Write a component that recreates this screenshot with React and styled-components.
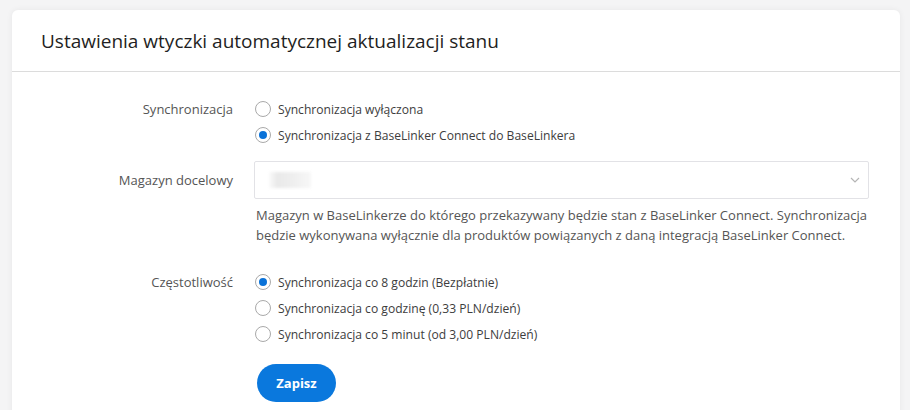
import React, { useState } from 'react'
import styled, { createGlobalStyle } from 'styled-components';

const GlobalStyle = createGlobalStyle`
    body {
        margin: 0;
        background: #f4f4f5;
        font-family: 'Open Sans', 'Liberation Sans', sans-serif;
        color: #444;
    }
`

function Radio({ checked, label, onClick }) {
    return (
        <Option onClick={onClick}>
            <Circle checked={checked} />
            <span>{label}</span>
        </Option>
    );
}

function App() {
    const [sync, setSync] = useState(1);
    const [freq, setFreq] = useState(0);

    const syncOptions = [
        'Synchronizacja wyłączona',
        'Synchronizacja z BaseLinker Connect do BaseLinkera',
    ];
    const freqOptions = [
        'Synchronizacja co 8 godzin (Bezpłatnie)',
        'Synchronizacja co godzinę (0,33 PLN/dzień)',
        'Synchronizacja co 5 minut (od 3,00 PLN/dzień)',
    ];

    return (
        <Page>
            <GlobalStyle />
            <Card>
                <Header>Ustawienia wtyczki automatycznej aktualizacji stanu</Header>
                <Body>
                    <Label>Synchronizacja</Label>
                    <Options>
                        {syncOptions.map((o, i) => (
                            <Radio key={o} label={o} checked={sync === i} onClick={() => setSync(i)} />
                        ))}
                    </Options>

                    <Label center>Magazyn docelowy</Label>
                    <div>
                        <Select>
                            <Blur />
                            <svg width="10" height="6" viewBox="0 0 10 6">
                                <path d="M1 1l4 4 4-4" fill="none" stroke="#b5b5b5" strokeWidth="1.2" />
                            </svg>
                        </Select>
                        <Help>
                            Magazyn w BaseLinkerze do którego przekazywany będzie stan z BaseLinker Connect. Synchronizacja
                            będzie wykonywana wyłącznie dla produktów powiązanych z daną integracją BaseLinker Connect.
                        </Help>
                    </div>

                    <Label>Częstotliwość</Label>
                    <Options>
                        {freqOptions.map((o, i) => (
                            <Radio key={o} label={o} checked={freq === i} onClick={() => setFreq(i)} />
                        ))}
                    </Options>

                    <span />
                    <div>
                        <Button>Zapisz</Button>
                    </div>
                </Body>
            </Card>
        </Page>
    );
}

const Page = styled.div`
    padding: 10px 10px 0 12px;
    height: 410px;
    box-sizing: border-box;
    overflow: hidden;
`

const Card = styled.div`
    width: 888px;
    background: #fff;
    border-radius: 6px;
    box-shadow: 0 0 6px rgba(0, 0, 0, 0.06);
    padding-bottom: 30px;
`

const Header = styled.div`
    height: 62px;
    display: flex;
    align-items: center;
    padding: 1px 0 0 29px;
    box-sizing: border-box;
    font-size: 19px;
    color: #1f1f23;
    border-bottom: 1px solid #dcdcdc;
`

const Body = styled.div`
    display: grid;
    grid-template-columns: 221px 1fr;
    column-gap: 21px;
    padding: 24px 31px 0 0;
    font-size: 13px;
    > *:nth-child(2) { margin-bottom: 13px; }
    > *:nth-child(4) { margin-bottom: 24px; }
    > *:nth-child(6) { margin-bottom: 17px; }
`

const Label = styled.div`
    text-align: right;
    color: #555;
    line-height: 26px;
    ${p => p.center && 'line-height: 38px;'}
`

const Options = styled.div`
    display: flex;
    flex-direction: column;
`

const Option = styled.label`
    display: flex;
    align-items: center;
    gap: 7px;
    height: 26px;
    font-size: 12.1px;
    color: #3d3d3d;
    cursor: pointer;
`

const Circle = styled.span`
    width: 16px;
    height: 16px;
    box-sizing: border-box;
    border: 1px solid #a9a9a9;
    border-radius: 50%;
    margin-left: 1px;
    display: flex;
    align-items: center;
    justify-content: center;
    &::after {
        content: '';
        width: 8px;
        height: 8px;
        border-radius: 50%;
        background: ${p => (p.checked ? '#0a72d8' : 'transparent')};
    }
`

const Select = styled.div`
    height: 38px;
    box-sizing: border-box;
    border: 1px solid #e2e2e6;
    border-radius: 2px;
    display: flex;
    align-items: center;
    justify-content: space-between;
    padding: 0 8px 0 14px;
`

const Blur = styled.div`
    width: 42px;
    height: 16px;
    background: linear-gradient(90deg, #fafafa 0%, #e9e9e9 20%, #efefef 60%, #f7f7f7 100%);
    filter: blur(1.5px);
`

const Help = styled.p`
    margin: 6px 0 0 2px;
    line-height: 20px;
    color: #555;
`

const Button = styled.button`
    margin-left: 3px;
    width: 79px;
    height: 38px;
    border: none;
    border-radius: 19px;
    background: #0a78dd;
    color: #fff;
    font-family: inherit;
    font-size: 13px;
    font-weight: 700;
    cursor: pointer;
`

export default App
